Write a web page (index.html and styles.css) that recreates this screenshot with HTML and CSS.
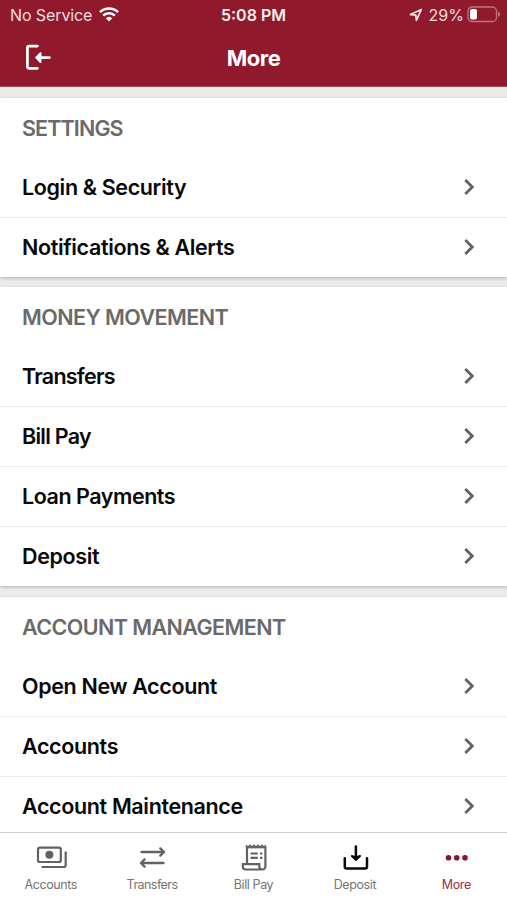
FILE: index.html
```html
<!DOCTYPE html>
<html lang="en">
<head>
<meta charset="utf-8">
<title>More</title>
<link rel="stylesheet" href="styles.css">
</head>
<body>
<svg width="0" height="0" class="defs"><symbol id="chev" viewBox="0 0 12 18"><path d="M2.3 2l7 7-7 7" fill="none" stroke="#626262" stroke-width="2.8"/></symbol></svg>
<div class="app">
  <header class="header">
    <div class="status">
      <div class="status-left"><span class="carrier">No Service</span>
        <svg class="wifi" width="20" height="15" viewBox="0 0 20 15"><g fill="none" stroke="#fff" stroke-width="2.6"><path d="M1 5.2a12.8 12.8 0 0 1 18 0"/><path d="M4.2 8.6a8.3 8.3 0 0 1 11.6 0"/></g><path d="M10 14.6l-3.3-3.4a4.8 4.8 0 0 1 6.6 0z" fill="#fff"/></svg>
      </div>
      <span class="time">5:08 PM</span>
      <div class="status-right">
        <svg class="loc" width="14" height="14" viewBox="0 0 14 14"><path d="M12.3 1.5L1.5 6.5l5.3.7.6 5.2z" fill="none" stroke="#f4dfe1" stroke-width="1.8" stroke-linejoin="round"/></svg>
        <span class="pct">29%</span>
        <svg class="batt" width="33" height="17" viewBox="0 0 33 17"><rect x="1" y="1" width="28.5" height="14.5" rx="4" fill="none" stroke="#bd7580" stroke-width="1.3"/><rect x="3" y="3" width="7" height="10.5" rx="2" fill="#fff"/><path d="M31 5.5q2 .8 2 2.8t-2 2.8z" fill="#bd7580"/></svg>
      </div>
    </div>
    <div class="nav">
      <svg class="exit" width="27" height="27" viewBox="0 0 27 27" fill="none" stroke="#fff" stroke-width="2.8" stroke-linecap="round" stroke-linejoin="round"><path d="M13.4 2.1H5a1.6 1.6 0 0 0-1.6 1.6v19A1.6 1.6 0 0 0 5 24.3h8.4"/><path d="M25.4 13.6H13"/><path d="M16.5 9.2l-4.2 4.4 4.2 4.4z" fill="#fff" stroke-width="2"/></svg>
      <h1>More</h1>
    </div>
  </header>
  <main class="content">
    <section class="card">
      <h2 class="settings">SETTINGS</h2>
      <div class="row"><span>Login &amp; Security</span><svg class="chev"><use href="#chev"/></svg></div>
      <div class="row"><span>Notifications &amp; Alerts</span><svg class="chev"><use href="#chev"/></svg></div>
    </section>
    <section class="card">
      <h2>MONEY MOVEMENT</h2>
      <div class="row"><span class="tight">Transfers</span><svg class="chev"><use href="#chev"/></svg></div>
      <div class="row"><span class="tight">Bill Pay</span><svg class="chev"><use href="#chev"/></svg></div>
      <div class="row"><span class="snug">Loan Payments</span><svg class="chev"><use href="#chev"/></svg></div>
      <div class="row"><span>Deposit</span><svg class="chev"><use href="#chev"/></svg></div>
    </section>
    <section class="card">
      <h2>ACCOUNT MANAGEMENT</h2>
      <div class="row"><span>Open New Account</span><svg class="chev"><use href="#chev"/></svg></div>
      <div class="row"><span>Accounts</span><svg class="chev"><use href="#chev"/></svg></div>
      <div class="row"><span>Account Maintenance</span><svg class="chev"><use href="#chev"/></svg></div>
    </section>
  </main>
  <nav class="tabs">
    <div class="tab"><svg width="32" height="28" viewBox="0 0 32 28" fill="none" stroke="#626262" stroke-width="2.2"><rect x="3" y="3.6" width="22.8" height="14.4" rx="1.8"/><circle cx="14.4" cy="10.8" r="4" fill="#626262" stroke="none"/><path d="M30.7 7.5V21a2 2 0 0 1-2 2H6.5"/></svg><span>Accounts</span></div>
    <div class="tab"><svg width="28" height="28" viewBox="0 0 28 28" fill="none" stroke="#626262" stroke-width="2.3" stroke-linecap="round" stroke-linejoin="round"><path d="M3.5 8h22M4 19h21.5"/><path d="M22.3 4.4L26 8l-3.7 3.6M6.6 15.4L2.9 19l3.7 3.6"/></svg><span>Transfers</span></div>
    <div class="tab"><svg width="28" height="28" viewBox="0 0 28 28" fill="none" stroke="#626262" stroke-width="2.2"><path d="M8 19.5V3M26.4 3v19.3a3 3 0 0 1-3 3.2"/><path d="M6.9 1.4l2 2 2-2 2 2 2-2 2 2 2-2 2 2 2-2 2 2 2-2" stroke-width="1.7"/><path d="M7 3.6h20.2" stroke-width="1.4"/><path d="M23.4 25.5H6.8a3 3 0 0 1-3-3v-2.3h16.5v2.3a3.2 3.2 0 0 0 3.3 3"/><path d="M11.5 9.5h7.3M11.5 13.8h7.3M21 9.5h2.4M21 13.8h2.4"/></svg><span>Bill Pay</span></div>
    <div class="tab"><svg width="28" height="28" viewBox="0 0 28 28" fill="none" stroke="#080808" stroke-width="2.5" stroke-linecap="round" stroke-linejoin="round"><path d="M3.8 14.2v8.6a1.8 1.8 0 0 0 1.8 1.8h18.6a1.8 1.8 0 0 0 1.8-1.8v-8.6M14.9 2.6v12"/><path d="M10.8 12l4.1 4 4.1-4-4.1 1.4z" fill="#080808" stroke-width="2"/></svg><span>Deposit</span></div>
    <div class="tab active"><svg width="28" height="28" viewBox="0 0 28 28" fill="#8f1230"><circle cx="6.5" cy="13.8" r="2.8"/><circle cx="14.7" cy="13.8" r="2.8"/><circle cx="23" cy="13.8" r="2.8"/></svg><span>More</span></div>
  </nav>
</div>
</body>
</html>
```

FILE: styles.css
```css
* { box-sizing: border-box; }
body { margin: 0; font-family: Inter, "Liberation Sans", sans-serif; background: #fff; }
.defs { position: absolute; }
.app { width: 507px; height: 900px; display: flex; flex-direction: column; overflow: hidden; }
.header { height: 87px; flex: none; background: #91192c; color: #fff; border-bottom: 1px solid #a84957; }
.status { height: 30px; display: grid; grid-template-columns: 1fr auto 1fr; align-items: center; font-size: 16px; line-height: 30px; }
.status-left { display: flex; align-items: center; padding-left: 10px; gap: 7px; }
.carrier { color: #f4dfe1; letter-spacing: -.1px; }
.wifi { margin-top: -2px; }
.time { font-weight: 600; color: #fbeff0; }
.status-right { display: flex; align-items: center; justify-content: flex-end; padding-right: 7px; }
.loc { margin-right: 6px; }
.pct { color: #f4dfe1; margin-right: 3px; }
.batt { margin-top: -2px; }
.nav { height: 56px; display: grid; grid-template-columns: 1fr auto 1fr; align-items: center; }
.exit { margin: -2px 0 0 24px; }
h1 { grid-column: 2; margin: 0; font-size: 22px; line-height: 28px; font-weight: 700; letter-spacing: -.5px; }
.content { flex: 1; min-height: 0; overflow: hidden; background: #ebebeb; padding-top: 10.5px; display: flex; flex-direction: column; gap: 10.5px; }
.card { flex: none; background: #fff; box-shadow: 0 1px 3px rgba(0,0,0,.25); }
h2 { margin: 0; height: 59px; padding-left: 22px; font-size: 21.5px; line-height: 60px; font-weight: 600; color: #6a6a6a; white-space: nowrap; letter-spacing: -.57px; }
.settings { letter-spacing: -.88px; }
.row { height: 60px; padding: 0 32px 0 22px; display: flex; align-items: center; justify-content: space-between; font-size: 21.5px; font-weight: 600; color: #080808; white-space: nowrap; letter-spacing: -.36px; }
.row + .row { box-shadow: inset 0 1px #ececec; }
.tight { letter-spacing: -.75px; }
.snug { letter-spacing: -.46px; }
.chev { width: 12px; height: 18px; }
.tabs { flex: none; height: 68px; border-top: 1px solid #cfcfcf; background: #fff; display: grid; grid-template-columns: repeat(5, 1fr); }
.tab { display: flex; flex-direction: column; align-items: center; padding-top: 11px; font-size: 12.5px; line-height: 16px; color: #747474; letter-spacing: -.4px; }
.tab span { margin-top: 5px; }
.tab:nth-child(2) span { letter-spacing: -.55px; }
.tab.active { color: #9b2f49; }
```
